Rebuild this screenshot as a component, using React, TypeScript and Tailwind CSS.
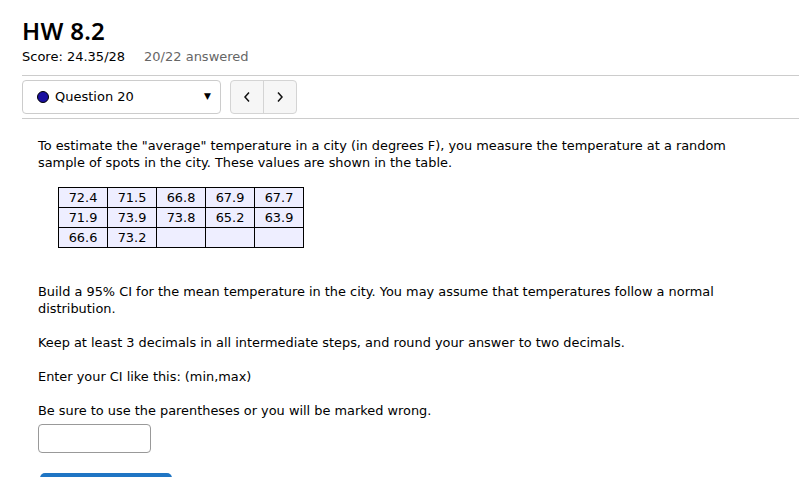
import { useState } from "react"

const rows = [
  ["72.4", "71.5", "66.8", "67.9", "67.7"],
  ["71.9", "73.9", "73.8", "65.2", "63.9"],
  ["66.6", "73.2", "", "", ""],
]

export default function App() {
  const [answer, setAnswer] = useState("")

  return (
    <div className="min-h-screen bg-white text-black font-['DejaVu_Sans',sans-serif] overflow-hidden">
      <div className="pl-[22px] pt-[16px]">
        <h1 className="font-['Noto_Sans',sans-serif] text-[24px] font-semibold leading-[30px] tracking-[0.3px]">HW 8.2</h1>
        <div className="mt-[3px] text-[13px] leading-[16px]">
          <span>Score: 24.35/28</span>
          <span className="ml-[19px] text-[#666]">20/22 answered</span>
        </div>
        <div className="mt-[10px] border-t border-[#ccc]" />
        <div className="flex items-center gap-[9px] py-[4px]">
          <div className="flex h-[34px] w-[199px] items-center rounded-[4px] border border-[#ccc] pl-[14px] pr-[9px] text-[13px]">
            <span className="h-[12px] w-[12px] rounded-full border border-black bg-[#1a0fa0]" />
            <span className="ml-[6px]">Question 20</span>
            <span className="ml-auto text-[9px]">▼</span>
          </div>
          <div className="flex h-[34px] w-[67px] rounded-[4px] border border-[#d4d4d4] bg-[#f6f6f6]">
            <button className="flex w-1/2 items-center justify-center border-r border-[#d4d4d4]">
              <svg width="8" height="12" viewBox="0 0 8 12" fill="none" stroke="#111" strokeWidth="1.5">
                <path d="M6 1.5 L2 6 L6 10.5" />
              </svg>
            </button>
            <button className="flex w-1/2 items-center justify-center">
              <svg width="8" height="12" viewBox="0 0 8 12" fill="none" stroke="#111" strokeWidth="1.5">
                <path d="M2 1.5 L6 6 L2 10.5" />
              </svg>
            </button>
          </div>
        </div>
        <div className="border-t border-[#ccc]" />
      </div>

      <div className="w-[760px] pl-[38px] pt-[18px] text-[12.9px] leading-[17px]">
        <p>
          To estimate the "average" temperature in a city (in degrees F), you measure the temperature at a random
          sample of spots in the city. These values are shown in the table.
        </p>

        <table className="mt-[16px] ml-[20px] border-collapse">
          <tbody>
            {rows.map((r, i) => (
              <tr key={i}>
                {r.map((c, j) => (
                  <td key={j} className="h-[20px] w-[49px] border border-black bg-[#eeeeff] p-0 text-center leading-[18px]">
                    {c}
                  </td>
                ))}
              </tr>
            ))}
          </tbody>
        </table>

        <p className="mt-[35px]">
          Build a 95% CI for the mean temperature in the city. You may assume that temperatures follow a normal
          distribution.
        </p>
        <p className="mt-[17px]">Keep at least 3 decimals in all intermediate steps, and round your answer to two decimals.</p>
        <p className="mt-[17px]">Enter your CI like this: (min,max)</p>
        <p className="mt-[17px]">Be sure to use the parentheses or you will be marked wrong.</p>

        <input
          value={answer}
          onChange={(e) => setAnswer(e.target.value)}
          className="mt-[5px] block h-[29px] w-[113px] rounded-[4px] border border-[#999] px-[4px] text-[13px] outline-none"
        />
        <button className="mt-[20px] ml-[2px] block h-[20px] w-[132px] rounded-t-[5px] bg-[#1f75c4]" />
      </div>
    </div>
  )
}
